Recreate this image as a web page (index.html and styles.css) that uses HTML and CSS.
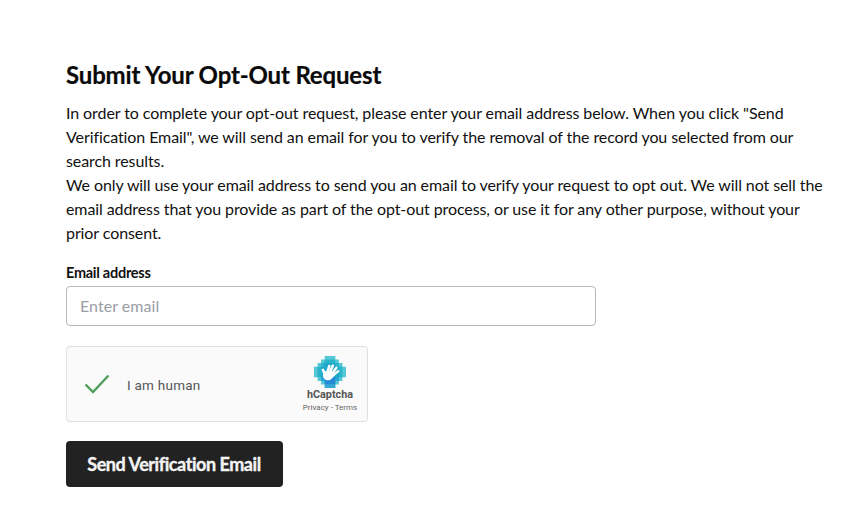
FILE: index.html
```html
<!DOCTYPE html>
<html lang="en">
<head>
<meta charset="utf-8">
<title>Submit Your Opt-Out Request</title>
<link rel="stylesheet" href="styles.css">
</head>
<body>
<main class="page">
  <h1 class="title">Submit Your Opt-Out Request</h1>
  <p class="copy">In order to complete your opt-out request, please enter your email address below. When you click "Send Verification Email", we will send an email for you to verify the removal of the record you selected from our search results.<br>We only will use your email address to send you an email to verify your request to opt out. We will not sell the email address that you provide as part of the opt-out process, or use it for any other purpose, without your prior consent.</p>
  <form class="form">
    <label class="label" for="email">Email address</label>
    <input class="input" id="email" type="text" placeholder="Enter email">
    <div class="captcha">
      <svg class="check" viewBox="0 0 26 22" width="26" height="22" aria-hidden="true"><path d="M1.500 11.500 L9 19 L24.500 2.500" fill="none" stroke="#4f9f5a" stroke-width="2.400"/></svg>
      <span class="human">I am human</span>
      <div class="brand">
        <svg class="logo" viewBox="0 0 9 9" width="32" height="32" aria-hidden="true">
          <path fill="#55c8d6" d="M3 0h3v1h1v1h1v1h1v3h-1v1h-1v1h-1v1H3V8H2V7H1V6H0V3h1V2h1V1h1z"/>
          <path fill="#2bb4c9" d="M3 1h3v1h1v1h1v3H7v1H6v1H3V7H2V6H1V3h1V2h1z"/>
          <path fill="#1ba6cb" d="M3 2h3v1h1v3H6v1H3V6H2V3h1z"/>
          <path fill="#2589d6" d="M3 6h3v2H3z"/>
          <path fill="#2f9fd8" d="M2 6h1v1H2zM6 6h1v1H6zM3 8h3v1H3z" opacity=".8"/>
          <g fill="none" stroke="#fff" stroke-width=".72" stroke-linecap="round">
            <path d="M3.700 4.800 4.300 2.800"/>
            <path d="M4.400 4.800 5.300 2.700"/>
            <path d="M5 5 6.300 3.300"/>
            <path d="M5.300 5.400 6.800 4.300"/>
            <path d="M2.500 3.900 3.100 5.200"/>
          </g>
          <path fill="#fff" d="M2.600 5c.2-.6.900-.9 1.500-.9l1.700.5c.3.100.4.500.2.700L4.900 6.500c-.6.500-1.500.400-2-.100-.400-.400-.500-.900-.300-1.400z"/>
        </svg>
        <span class="brand-name">hCaptcha</span>
        <span class="brand-links">Privacy - Terms</span>
      </div>
    </div>
    <button class="send" type="button">Send Verification Email</button>
  </form>
</main>
</body>
</html>
```
FILE: styles.css
```css
* { box-sizing: border-box; }
html, body { margin: 0; background: #fff; }
body { font-family: Lato, "Open Sans", sans-serif; color: #111; overflow: hidden; }
.page { padding: 59px 0 0 66px; width: 847px; height: 512px; }
.title { margin: 0 0 10px; font-size: 24px; line-height: 32px; font-weight: 700; letter-spacing: -0.16px; color: #0a0a0a; -webkit-text-stroke: 0.2px #0a0a0a; }
.copy { margin: 0 0 18px; width: 760px; font-size: 16px; line-height: 24px; letter-spacing: -0.09px; color: #111; }
.form { display: flex; flex-direction: column; align-items: flex-start; }
.label { font-size: 14.500px; line-height: 20px; font-weight: 700; letter-spacing: -0.27px; margin-bottom: 3px; }
.input { width: 530px; height: 40px; padding: 0 13px 2px; border: 1px solid #b8b8b8; border-radius: 4px; font: 400 16px Lato, sans-serif; letter-spacing: .05px; background: #fff; outline: none; }
.input::placeholder { color: #9a9da3; opacity: 1; }
.captcha { margin-top: 20px; width: 302px; height: 76px; display: flex; align-items: center; border: 1px solid #e0e0e0; border-radius: 4px; background: #fafafa; padding-left: 17px; }
.human { margin: 2px 0 0 17px; font: 400 13.500px "Roboto", sans-serif; letter-spacing: .25px; color: #555; }
.brand { margin-left: auto; margin-right: 5px; width: 64px; display: flex; flex-direction: column; align-items: center; }
.logo { display: block; margin-bottom: 0; filter: blur(0.45px); }
.brand-name { font: 700 10.800px/14px "Roboto", sans-serif; color: #555; }
.brand-links { font: 400 8px/11px "Roboto", sans-serif; color: #666; }
.send { margin-top: 19px; width: 217px; height: 46px; border: 0; border-radius: 4px; background: #222; color: #f4f4f4; font: 700 18px Lato, sans-serif; letter-spacing: -0.45px; padding: 0 1px 0 0; -webkit-text-stroke: 0.35px #f4f4f4; }
```
